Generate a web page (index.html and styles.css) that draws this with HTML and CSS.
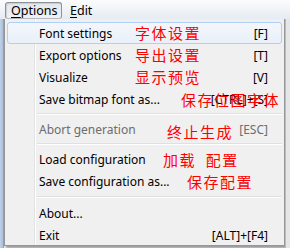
FILE: index.html
```html
<!DOCTYPE html>
<html>
<head>
<meta charset="utf-8">
<link rel="stylesheet" href="styles.css">
</head>
<body>
<div class="win">
  <div class="menubar">
    <span class="mb-item pressed"><u>O</u>ptions</span>
    <span class="mb-item"><u>E</u>dit</span>
  </div>
  <div class="body">
    <div class="frame-left"></div>
    <div class="popup">
      <div class="item hover"><span class="label">Font settings</span><span class="key">[F]</span><span class="note n1">字体设置</span></div>
      <div class="item"><span class="label">Export options</span><span class="key">[T]</span><span class="note n1">导出设置</span></div>
      <div class="item"><span class="label">Visualize</span><span class="key">[V]</span><span class="note n1">显示预览</span></div>
      <div class="item"><span class="label">Save bitmap font as...</span><span class="key">[CTRL]+[S]</span><span class="note n4">保存位图字体</span></div>
      <div class="sep"></div>
      <div class="item disabled"><span class="label">Abort generation</span><span class="key">[ESC]</span><span class="note n5">终止生成</span></div>
      <div class="sep"></div>
      <div class="item"><span class="label">Load configuration</span><span class="note n6">加载&nbsp;&nbsp;配置</span></div>
      <div class="item"><span class="label">Save configuration as...</span><span class="note n7">保存配置</span></div>
      <div class="sep sep-wide"></div>
      <div class="item"><span class="label">About...</span></div>
      <div class="item"><span class="label">Exit</span><span class="key">[ALT]+[F4]</span></div>
    </div>
    <div class="frame-right"></div>
  </div>
</div>
</body>
</html>
```
FILE: styles.css
```css
html, body {
  margin: 0;
  padding: 0;
  background: #e9ecf0;
}
.win {
  width: 290px;
  height: 248px;
  overflow: hidden;
  font-family: "Noto Sans", "Liberation Sans", sans-serif;
  font-size: 12px;
  color: #000;
  display: flex;
  flex-direction: column;
}
.menubar {
  height: 19px;
  flex: none;
  display: flex;
  align-items: flex-start;
  padding: 2px 0 0 5px;
  box-sizing: border-box;
  gap: 2px;
  background: linear-gradient(#fbfcfd, #e6ebf2);
}
.mb-item {
  height: 17px;
  line-height: 16px;
  padding: 0 5px 0 5px;
  box-sizing: border-box;
  border: 1px solid transparent;
  border-radius: 3px;
  font-size: 12.5px;
}
.mb-item u { text-decoration-thickness: 1px; text-underline-offset: 2px; }
.mb-item.pressed {
  border-color: #8e9297 #8e9297 #b5b9be #8e9297;
  background: linear-gradient(#e4e7eb, #eef1f5);
  box-shadow: inset 1px 1px 1px rgba(0,0,0,0.12);
  width: 57px;
}
.body {
  flex: 1;
  display: flex;
  min-height: 0;
}
.frame-left {
  width: 3px;
  flex: none;
  background: linear-gradient(90deg, #bfd1e8, #a9bfdc);
  border-right: 1px solid #8aa0bc;
}
.frame-right {
  flex: 1;
  background: #e4e7ea;
  border-left: 1px solid #b8bcc0;
}
.popup {
  width: 281px;
  flex: none;
  height: 227px;
  box-sizing: border-box;
  border: 1px solid #979797;
  border-top: none;
  padding: 3px 2px 0 2px;
  background:
    linear-gradient(90deg, transparent 29px, #e2e3e3 29px, #e2e3e3 30px, #ffffff 30px, #ffffff 31px, transparent 31px),
    #f0f0f0;
  box-shadow: 2px 2px 2px rgba(0,0,0,0.35);
}
.item {
  position: relative;
  height: 22px;
  display: flex;
  align-items: center;
  padding: 0 13px 0 31px;
  box-sizing: border-box;
  border: 1px solid transparent;
  border-radius: 3px;
}
.item.hover {
  border-color: #aecff7;
  background: linear-gradient(#f3f7fc, #e9f0f9);
}
.label {
  flex: 1;
  white-space: nowrap;
}
.key {
  white-space: nowrap;
}
.disabled { color: #6d6d6d; }
.sep {
  height: 8px;
  margin-left: 30px;
  background: linear-gradient(transparent 3px, #e0e0e0 3px, #e0e0e0 4px, #ffffff 4px, #ffffff 5px, transparent 5px);
}
.sep-wide {
  height: 10px;
  background: linear-gradient(transparent 4px, #e0e0e0 4px, #e0e0e0 5px, #ffffff 5px, #ffffff 6px, transparent 6px);
}
.note {
  position: absolute;
  top: 0;
  font-family: "Noto Sans CJK SC", sans-serif;
  font-size: 15px;
  line-height: 20px;
  letter-spacing: 1.5px;
  color: #ff0000;
  white-space: nowrap;
}
.n1 { left: 127px; }
.n4 { left: 173px; top: 1px; }
.n5 { left: 159px; top: 3px; }
.n6 { left: 155px; top: 1px; }
.n7 { left: 179px; top: 1px; }
```
